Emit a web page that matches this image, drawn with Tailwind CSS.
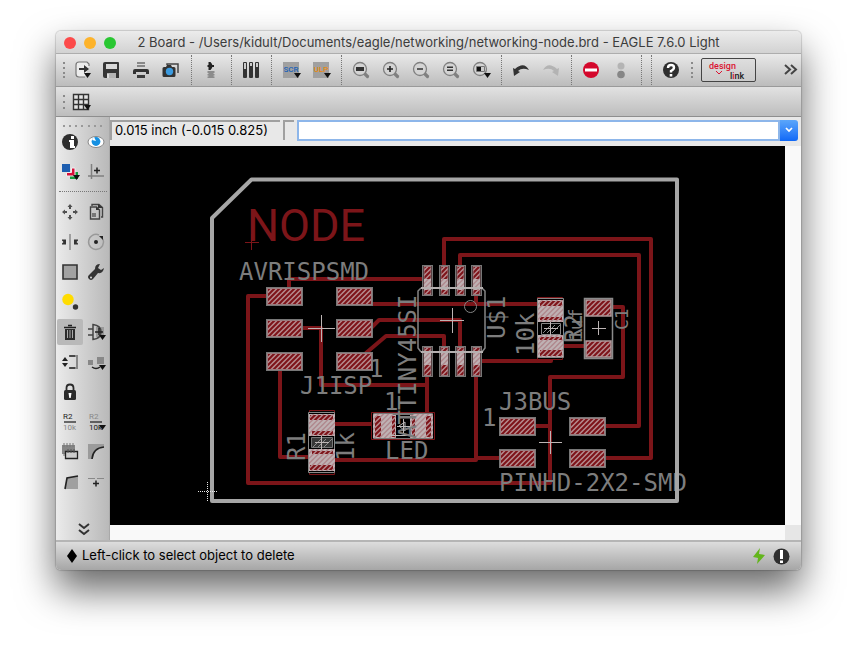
<!DOCTYPE html>
<html lang="en">
<head>
<meta charset="utf-8">
<title>2 Board - networking-node.brd - EAGLE 7.6.0 Light</title>
<script src="https://cdn.jsdelivr.net/npm/@tailwindcss/browser@4"></script>
</head>
<body class="bg-white font-['Inter','Liberation_Sans',sans-serif]">
<main class="mx-14 mt-[31px] mb-20 overflow-hidden rounded-[5px] bg-[#e8e8e8] shadow-[0_0_1px_1px_rgba(0,0,0,0.15),0_20px_38px_rgba(0,0,0,0.6)]">

  <!-- Title bar -->
  <header class="flex h-[23px] items-center border-b border-[#adadad] bg-linear-to-b from-[#ececec] to-[#d2d2d2] px-2 pt-[2px]">
    <div class="flex gap-2">
      <button aria-label="Close" class="size-3 rounded-full bg-[#fc4a4a]"></button>
      <button aria-label="Minimise" class="size-3 rounded-full bg-[#fdb32b]"></button>
      <button aria-label="Zoom" class="size-3 rounded-full bg-[#29c732]"></button>
    </div>
    <h1 class="min-w-0 flex-1 pr-13 text-center text-[13px] whitespace-nowrap text-[#3c3c3c]">2 Board - /Users/kidult/Documents/eagle/networking/networking-node.brd - EAGLE 7.6.0 Light</h1>
  </header>

  <!-- Action toolbar -->
  <nav aria-label="Actions" class="flex h-[33px] items-center border-b border-[#9a9a9a] bg-linear-to-b from-[#e9e9e9] to-[#bcbcbc]">
    <svg class="h-[30px] w-[10px]" viewBox="0 0 10 30" fill="#8a8a8a"><path d="M7 7h2v2H7zM7 12h2v2H7zM7 17h2v2H7zM7 21h2v2H7z"/></svg>
    <button aria-label="Open"><svg width="30" height="30" viewBox="0 0 30 30"><path d="M23 11V9l-2-2h-8q-3 0-3 3v9q0 3 3 3h6" fill="#ececec" stroke="#777" stroke-width="1.200"/><path d="M13 13h5v-3l5 4-5 4v-3h-5z" fill="#333"/><path d="M18 18h7l-3.500 5z" fill="#111"/></svg></button>
    <button aria-label="Save"><svg width="30" height="30" viewBox="0 0 30 30"><path d="M9 7h13q1 0 1 1v15H9q-2 0-2-2V9q0-2 2-2z" fill="#363636"/><path d="M10 9h11v5H10z" fill="#d9d9d9"/><path d="M11 18h9v5h-9z" fill="#b5b5b5"/><path d="M11 19h2v4h-2z" fill="#ddd"/></svg></button>
    <button aria-label="Print"><svg width="30" height="30" viewBox="0 0 30 30"><path d="M11 7h8v2h-8zM11 10h8v2h-8z" fill="#888"/><path d="M9 14h12q2 0 2 2v3h-3v-2H10v2H7v-3q0-2 2-2z" fill="#333"/><path d="M11 20h8v3h-8z" fill="#3c3c3c"/></svg></button>
    <button aria-label="CAM processor"><svg width="30" height="30" viewBox="0 0 30 30"><path d="M11 10V9h11v9" fill="none" stroke="#444" stroke-width="1.500"/><path d="M8 12h2l1-2h4l1 2h2q1.500 0 1.500 1.500v7q0 1.500-1.500 1.500H8q-1.500 0-1.500-1.500v-7Q6.500 12 8 12z" fill="#333"/><circle cx="13.500" cy="16.500" r="3.700" fill="#3b9be0"/></svg></button>
    <span class="ml-[5px] h-[30px] w-[5px] border-l border-dotted border-[#777]"></span>
    <button aria-label="Switch to schematic"><svg width="30" height="30" viewBox="0 0 30 30"><path d="M12.500 7h2q4 4 0 8h-2v-3h-1v-2h1z" fill="#222"/><path d="M15 10h3v2h-3z" fill="#222"/><path d="M11.500 16h7v2h-7zM11.500 19h7v1.500h-7zM11.500 21.500h7V23h-7z" fill="#8c8c8c"/><path d="M12.500 16h5v7h-5z" fill="#8c8c8c"/></svg></button>
    <span class="ml-[5px] h-[30px] w-[5px] border-l border-dotted border-[#777]"></span>
    <button aria-label="Library"><svg width="30" height="30" viewBox="0 0 30 30"><g fill="#333"><rect x="7" y="7" width="4" height="16" rx="1"/><rect x="13" y="7" width="4" height="16" rx="1"/><rect x="19" y="7" width="4" height="16" rx="1"/></g><path d="M8 8h2v6H8zM14 8h2v3h-2zM20 8h2v4h-2z" fill="#ccc"/></svg></button>
    <span class="ml-[5px] h-[30px] w-[5px] border-l border-dotted border-[#777]"></span>
    <button aria-label="Run script"><svg width="30" height="30" viewBox="0 0 30 30"><path d="M7 7h16v16H7z" fill="#a0a0a0"/><text x="15" y="17" text-anchor="middle" font-family="Roboto,sans-serif" font-size="8" font-weight="500" fill="#1a62b8">SCR</text><path d="M18 18h7l-3.500 5z" fill="#111"/></svg></button>
    <button aria-label="Run user language program"><svg width="30" height="30" viewBox="0 0 30 30"><path d="M7 7h16v16H7z" fill="#a0a0a0"/><text x="15" y="17" text-anchor="middle" font-family="Roboto,sans-serif" font-size="8" font-weight="500" fill="#e8890c">ULP</text><path d="M18 18h7l-3.500 5z" fill="#111"/></svg></button>
    <span class="ml-[5px] h-[30px] w-[5px] border-l border-dotted border-[#777]"></span>
    <button aria-label="Fit"><svg width="30" height="30" viewBox="0 0 30 30"><path d="M18 18l3.500 3.500" stroke="#808080" stroke-width="3.200" stroke-linecap="round"/><circle cx="14" cy="14" r="6.500" fill="#d4d4d4" stroke="#808080" stroke-width="1.300"/><path d="M10 12h8v4h-8z" fill="#333"/></svg></button>
    <button aria-label="Zoom in"><svg width="30" height="30" viewBox="0 0 30 30"><path d="M18 18l3.500 3.500" stroke="#808080" stroke-width="3.200" stroke-linecap="round"/><circle cx="14" cy="14" r="6.500" fill="#d4d4d4" stroke="#808080" stroke-width="1.300"/><path d="M11 13.200h2.200V11h1.600v2.200H17v1.600h-2.200V17h-1.600v-2.200H11z" fill="#222"/></svg></button>
    <button aria-label="Zoom out"><svg width="30" height="30" viewBox="0 0 30 30"><path d="M18 18l3.500 3.500" stroke="#808080" stroke-width="3.200" stroke-linecap="round"/><circle cx="14" cy="14" r="6.500" fill="#d4d4d4" stroke="#808080" stroke-width="1.300"/><path d="M11 13.200h6v1.600h-6z" fill="#333"/></svg></button>
    <button aria-label="Redraw"><svg width="30" height="30" viewBox="0 0 30 30"><path d="M18 18l3.500 3.500" stroke="#808080" stroke-width="3.200" stroke-linecap="round"/><circle cx="14" cy="14" r="6.500" fill="#d4d4d4" stroke="#808080" stroke-width="1.300"/><path d="M11 11.500h6V13h-6zM11 14.500h6V16h-6z" fill="#333"/></svg></button>
    <button aria-label="Select view"><svg width="30" height="30" viewBox="0 0 30 30"><circle cx="14" cy="14" r="6.500" fill="#d4d4d4" stroke="#808080" stroke-width="1.300"/><path d="M10.500 11.500h8v5h-8z" fill="#ccc" stroke="#777"/><path d="M11 12h4v4h-4z" fill="#111"/><path d="M18 18h7l-3.500 5z" fill="#111"/></svg></button>
    <span class="ml-[5px] h-[30px] w-[5px] border-l border-dotted border-[#777]"></span>
    <button aria-label="Undo"><svg width="30" height="30" viewBox="0 0 30 30"><path d="M7 13l1 8 6-4-2-1q4-4 11-1-5-9-14-1z" fill="#333"/></svg></button>
    <button aria-label="Redo" disabled><svg width="30" height="30" viewBox="0 0 30 30"><path d="M23 13l-1 8-6-4 2-1q-4-4-11-1 5-9 14-1z" fill="#b3b3b3"/></svg></button>
    <span class="ml-[5px] h-[30px] w-[5px] border-l border-dotted border-[#777]"></span>
    <button aria-label="Stop"><svg width="30" height="30" viewBox="0 0 30 30"><circle cx="15" cy="15" r="8" fill="#d4082c"/><path d="M9 13.500h12v3H9z" fill="#fff"/></svg></button>
    <button aria-label="Go" disabled><svg width="30" height="30" viewBox="0 0 30 30"><circle cx="15" cy="11" r="3.500" fill="#b4b4b4"/><circle cx="15" cy="19.500" r="3.800" fill="#868686"/></svg></button>
    <span class="ml-[5px] h-[30px] w-[5px] border-l border-dotted border-[#777]"></span>
    <span class="ml-[5px] h-[30px] w-[5px] border-l border-dotted border-[#777]"></span>
    <button aria-label="Help"><svg width="30" height="30" viewBox="0 0 30 30"><circle cx="15" cy="15" r="8" fill="#2e2e2e"/><path d="M12 13q0-3 3-3t3 2.500q0 2-3 3.500v1.500" fill="none" stroke="#fff" stroke-width="2.400"/><path d="M13.700 19h2.600v2.500h-2.600z" fill="#fff"/></svg></button>
    <svg class="mr-[5px] h-[30px] w-[10px]" viewBox="0 0 10 30" fill="#8a8a8a"><path d="M5 7h2v2H5zM5 12h2v2H5zM5 17h2v2H5zM5 21h2v2H5z"/></svg>
    <button aria-label="design link" class="h-6 w-[55px] rounded-[2px] border border-[#444] bg-linear-to-b from-[#dedede] to-[#cacaca]"><svg width="53" height="22" viewBox="0 0 53 22" font-family="Roboto,sans-serif" font-weight="500" font-size="9"><text x="7" y="10" fill="#db1231">design</text><text x="28" y="20" fill="#222">l<tspan fill="#db1231">i</tspan>nk</text><path d="M14 12l3 3 3-3" fill="none" stroke="#db1231"/></svg></button>
    <button aria-label="More actions" class="ml-auto mr-[2px]"><svg width="16" height="30" viewBox="0 0 16 30" fill="none" stroke="#444" stroke-width="2"><path d="M2 10l5 4.500L2 19M8 10l5 4.500L8 19"/></svg></button>
  </nav>

  <!-- Parameter toolbar -->
  <nav aria-label="Parameters" class="flex h-[30px] items-center border-b border-[#8e8e8e] bg-linear-to-b from-[#e2e2e2] to-[#bdbdbd]">
    <svg class="h-[30px] w-[10px]" viewBox="0 0 10 30" fill="#8a8a8a"><path d="M7 8h2v2H7zM7 14h2v2H7zM7 20h2v2H7z"/></svg>
    <button aria-label="Grid"><svg width="30" height="30" viewBox="0 0 30 30"><path d="M7.500 7.500h15v15h-15zM12.500 7.500v15M17.500 7.500v15M7.500 12.500h15M7.500 17.500h15" fill="#e4e4e4" stroke="#333" stroke-width="1.400"/><path d="M18 18h7l-3.500 5z" fill="#111"/></svg></button>
  </nav>

  <div class="flex">
    <!-- Tool palette -->
    <nav aria-label="Tools" class="flex w-[54px] shrink-0 flex-col border-r border-[#a9a9a9] bg-linear-to-r from-[#ebebeb] to-[#b9b9b9] pl-px">
      <svg class="h-[10px] w-full" viewBox="0 0 52 10" fill="#999"><path d="M6 8h2v2H6zM12 8h2v2h-2zM18 8h2v2h-2zM24 8h2v2h-2zM31 8h2v2h-2zM37 8h2v2h-2zM43 8h2v2h-2z"/></svg>
      <div class="grid grid-cols-2">
        <button aria-label="Info"><svg width="26" height="30" viewBox="0 0 26 30"><circle cx="13" cy="15" r="8" fill="#2e2e2e"/><path d="M14 9h3v3h-3zM12 13h5v6h1v2h-5v-6h-1z" fill="#fff"/></svg></button>
        <button aria-label="Show"><svg width="26" height="30" viewBox="0 0 26 30"><ellipse cx="13" cy="15" rx="8" ry="5.500" fill="#fff" stroke="#888"/><circle cx="13" cy="14.500" r="4.400" fill="#1590e2"/><path d="M11 10l2 4-4-1z" fill="#fff"/></svg></button>
        <button aria-label="Display layers"><svg width="26" height="30" viewBox="0 0 26 30"><path d="M13 22v-3h5v-4h3v7z" fill="#159c3d"/><path d="M9.500 19v-3.500h5V11H18v8z" fill="#d8103a" stroke="#eee"/><path d="M5 7h8v8H5z" fill="#1d5eb0"/><path d="M16 18h7l-3.500 5z" fill="#111"/></svg></button>
        <button aria-label="Mark"><svg width="26" height="30" viewBox="0 0 26 30"><path d="M8.500 7v15M5 19h16" stroke="#808080" stroke-width="1.500"/><path d="M11 13.500h6M14 10.500v6" stroke="#222" stroke-width="1.500"/></svg></button>
      </div>
      <div class="flex h-[10px] flex-col pt-1"><span class="mx-0.5 border-t border-dotted border-[#777]"></span></div>
      <div class="grid grid-cols-2">
        <button aria-label="Move"><svg width="26" height="30" viewBox="0 0 26 30" fill="#505050"><path d="M13 7l2.500 3H14v2h-2v-2h-1.500zM13 23l2.500-3H14v-2h-2v2h-1.500zM5 15l3-2.500V14h2v2H8v1.500zM21 15l-3-2.500V14h-2v2h2v1.500z"/></svg></button>
        <button aria-label="Copy"><svg width="26" height="30" viewBox="0 0 26 30"><path d="M9 9V7.500h7l3.500 3V20H18M7.500 10h6l3 3v9h-9z" fill="none" stroke="#444" stroke-width="1.400"/><path d="M15 7l5 4h-5zM13 10l4 3h-4z" fill="#333"/><path d="M9 16h4v4H9z" fill="#777"/></svg></button>
        <button aria-label="Mirror"><svg width="26" height="30" viewBox="0 0 26 30"><path d="M13 7v16" stroke="#888" stroke-width="1.500"/><path d="M5 12.500h4v5H5v-1l1.500-1.500L5 13.500zM21 12.500h-4v5h4v-1L19.500 15l1.500-1.500z" fill="#333"/></svg></button>
        <button aria-label="Rotate"><svg width="26" height="30" viewBox="0 0 26 30"><path d="M16 8a7.500 7.500 0 1 0 4 4" fill="none" stroke="#999" stroke-width="1.500"/><circle cx="13" cy="15" r="2" fill="#222"/><path d="M16 9h4v4z" fill="#222"/></svg></button>
        <button aria-label="Group"><svg width="26" height="30" viewBox="0 0 26 30"><path d="M6 8h14v14H6z" fill="#a2a2a2" stroke="#333" stroke-width="1.600"/></svg></button>
        <button aria-label="Change"><svg width="26" height="30" viewBox="0 0 26 30"><path d="M17 7q-5 0-5 5l-6 6q-2 2 0 4t4 0l5-6q5 1 6-5l-3 2-3-2z" fill="#333"/><circle cx="8" cy="20.500" r="1" fill="#ddd"/></svg></button>
        <button aria-label="Paste"><svg width="26" height="30" viewBox="0 0 26 30"><circle cx="11" cy="12.500" r="5.700" fill="#ffdc00"/><circle cx="18.500" cy="20" r="2.700" fill="#333"/></svg></button>
        <span></span>
        <button aria-label="Delete" aria-pressed="true" class="h-[30px]"><svg width="26" height="30" viewBox="0 0 26 30"><rect y="2" width="26" height="26" rx="2" fill="#b9b9b9"/><path d="M11 8.500h4M7 10.500h12" fill="none" stroke="#222" stroke-width="1.600"/><path d="M8 12h10v11H8z" fill="#2c2c2c"/><path d="M10.500 13v8M13 13v8M15.500 13v8" stroke="#aaa"/></svg></button>
        <button aria-label="Add"><svg width="26" height="30" viewBox="0 0 26 30"><path d="M13 10h8v10h-8z" fill="#999"/><path d="M5 12h5M5 18h5M10 7.500q8 1 8 7.500t-8 7.500z" fill="none" stroke="#444" stroke-width="1.500"/><path d="M12 15h8M16 11v7" stroke="#222" stroke-width="1.500"/><path d="M16 18h7l-3.500 5z" fill="#111"/></svg></button>
        <button aria-label="Pinswap"><svg width="26" height="30" viewBox="0 0 26 30"><path d="M5 14l3-4 3 4zM5 16l3 4 3-4z" fill="#222"/><path d="M13 9h7v12h-7" fill="none" stroke="#888" stroke-width="2"/><path d="M12 9h6M12 21h6" stroke="#333" stroke-width="1.500"/></svg></button>
        <button aria-label="Replace"><svg width="26" height="30" viewBox="0 0 26 30"><path d="M5 13h5v5H5zM14 10h7v7h-7z" fill="#888"/><path d="M9 20q4 3 8 0" fill="none" stroke="#222" stroke-width="1.500"/><path d="M16 18h7l-3.500 5z" fill="#111"/></svg></button>
        <button aria-label="Lock"><svg width="26" height="30" viewBox="0 0 26 30"><path d="M9.500 14v-3q0-3.500 3.500-3.500t3.500 3.500v3" fill="none" stroke="#2a2a2a" stroke-width="1.800"/><rect x="7" y="13" width="12" height="10" rx="1.500" fill="#2a2a2a"/><path d="M11.500 16h3l-.8 5h-1.400z" fill="#fff"/></svg></button>
        <span></span>
        <button aria-label="Name"><svg width="26" height="30" viewBox="0 0 26 30" font-family="Roboto,sans-serif" font-size="8"><text x="6" y="12" fill="#222">R2</text><path d="M7 15h12" stroke="#333" stroke-width="1.400"/><text x="6" y="23" fill="#888">10k</text></svg></button>
        <button aria-label="Value"><svg width="26" height="30" viewBox="0 0 26 30" font-family="Roboto,sans-serif" font-size="8"><text x="6" y="12" fill="#888">R2</text><path d="M7 15h12" stroke="#333" stroke-width="1.400"/><text x="6" y="23" fill="#222">10k</text><path d="M16 18h7l-3.500 5z" fill="#111"/></svg></button>
        <button aria-label="Smash"><svg width="26" height="30" viewBox="0 0 26 30"><path d="M5 8h13v9H5z" fill="#858585"/><path d="M7 6v4M10 6v4M13 6v4M16 6v4M7 16v3" stroke="#777"/><path d="M8.500 14.500h12v7h-12z" fill="#ccc" stroke="#222" stroke-width="1.300"/><path d="M11 12v4M14 12v4M17 12v4" stroke="#555"/></svg></button>
        <button aria-label="Miter"><svg width="26" height="30" viewBox="0 0 26 30"><path d="M5 7h16v3q-11 1-12 12H5z" fill="#9b9b9b"/><path d="M9 22q1-11 12-12" fill="none" stroke="#222" stroke-width="1.600"/></svg></button>
        <button aria-label="Split"><svg width="26" height="30" viewBox="0 0 26 30"><path d="M8 22l2-11 11-2v13z" fill="#a0a0a0"/><path d="M8 22l2-11 11-2" fill="none" stroke="#222" stroke-width="1.600"/></svg></button>
        <button aria-label="Optimize"><svg width="26" height="30" viewBox="0 0 26 30"><path d="M5 11.500h7M14 11.500h7" stroke="#888"/><path d="M10 16.500h6M13 13.500v6" stroke="#222" stroke-width="1.500"/></svg></button>
      </div>
      <button aria-label="More tools" class="mt-auto mb-1 self-center"><svg width="14" height="16" viewBox="0 0 14 16" fill="none" stroke="#333" stroke-width="2"><path d="M3 4l5 4 5-4M3 10l5 4 5-4"/></svg></button>
    </nav>

    <div class="flex min-w-0 flex-1 flex-col">
      <!-- Coordinates and command line -->
      <div class="flex h-[29px] items-center gap-[3px] pr-[3px] pb-[3px]">
        <output class="flex h-5 w-[170px] items-center border-t-2 border-l-2 border-[#a0a0a0] pl-[3px] text-[13px] whitespace-nowrap text-black">0.015 inch (-0.015 0.825)</output>
        <span class="h-5 w-[11px] border-t-2 border-l-2 border-[#a0a0a0]"></span>
        <div class="flex h-[21px] min-w-0 flex-1">
          <input type="text" aria-label="Command" class="min-w-0 flex-1 border-2 border-[#8db6ea] bg-white px-1 text-[13px] outline-none">
          <button aria-label="Command history" class="flex w-[18px] items-center justify-center rounded-r-[3px] bg-linear-to-b from-[#5ba6fa] to-[#0f68f7]"><svg width="10" height="8" viewBox="0 0 10 8" fill="none" stroke="#fff" stroke-width="1.700"><path d="M2 2l3 3 3-3"/></svg></button>
        </div>
      </div>

      <div class="flex">
        <div class="min-w-0 flex-1 bg-black">
          <svg class="block h-auto w-full" viewBox="110 146 675 379" role="img" aria-label="Board layout">
            <defs>
              <pattern id="hatch" width="5" height="5" patternUnits="userSpaceOnUse"><path d="M0 0h5v5H0z" fill="#b58a8d"/><path d="M-1 1l2-2M0 5l5-5M4 6l2-2" stroke="#7d1218" stroke-width="2"/></pattern>
              <pattern id="mask" width="5" height="5" patternUnits="userSpaceOnUse"><path d="M0 0h5v5H0z" fill="#b0898e"/><path d="M-1 1l2-2M0 5l5-5M4 6l2-2" stroke="#bfb2b4" stroke-width="2"/></pattern>
              <g id="pad"><rect x=".5" y=".5" width="36" height="18" fill="#000" stroke="#777"/><rect x="1.500" y="1.500" width="34" height="16" fill="url(#hatch)" stroke="#9a7c7f"/></g>
              <g id="lead"><rect x=".5" y=".5" width="10" height="30" fill="#150a0a" stroke="#777"/><rect x="2" y="1.500" width="7" height="28" fill="url(#hatch)" stroke="#98797c"/></g>
            </defs>

            <!-- Copper traces -->
            <g fill="none" stroke="#7c1519" stroke-width="4" stroke-linejoin="round" stroke-linecap="round">
              <path d="M289 296V279H428M267 296H248V483H550V377H623V307H600M372 304H540M370 329L379 320H460V350M366 353L386 336H444V350M302 328H321V385H427V422M427 385V370M280 370V457H310M334 424H374M334 460H476V370M476 458H502M481 361H551V357M563 346H586M444 266V239H651V458H604M460 266V255H639V426H604M476 290V304M534 426H550"/>
            </g>
            <text x="247" y="241" font-family="Roboto,sans-serif" font-size="45" fill="#7c1519">NODE</text>
            <path d="M245 242.500h14M251.500 234v16" stroke="#7c1519"/>

            <!-- Header pads -->
            <use href="#pad" x="266" y="287"/><use href="#pad" x="266" y="319"/><use href="#pad" x="266" y="352"/>
            <use href="#pad" x="336" y="287"/><use href="#pad" x="336" y="319"/><use href="#pad" x="336" y="352"/>
            <use href="#pad" x="499" y="417"/><use href="#pad" x="499" y="449"/>
            <use href="#pad" x="569" y="417"/><use href="#pad" x="569" y="449"/>

            <!-- Microcontroller -->
            <use href="#lead" x="422" y="265"/><use href="#lead" x="439" y="265"/><use href="#lead" x="455" y="265"/><use href="#lead" x="471" y="265"/>
            <use href="#lead" x="422" y="346"/><use href="#lead" x="439" y="346"/><use href="#lead" x="455" y="346"/><use href="#lead" x="471" y="346"/>
            <path d="M424 279h7v11h-7zM441 279h7v11h-7zM457 279h7v11h-7zM473 279h7v11h-7zM424 353h7v12h-7zM441 353h7v12h-7zM457 353h7v12h-7zM473 353h7v12h-7z" fill="url(#mask)"/>
            <path d="M421 288L418 291V348L421 352M482 288L485 291V348L482 352" fill="none" stroke="#858585" stroke-width="1.500"/>
            <path d="M421 288H483M421 352H483" stroke="#b5b0b0" stroke-width="2"/>
            <circle cx="470.500" cy="306.500" r="6" fill="none" stroke="#858585"/>

            <!-- R2 -->
            <path d="M537.500 297.500h25v62h-25z" fill="#000" stroke="#7c1519"/>
            <path d="M537.500 298.500h26v59h-26z" fill="#000" stroke="#888"/>
            <path d="M538 300h25v22h-25zM538 335h25v22h-25z" fill="url(#mask)"/>
            <path d="M540 301h22v5h-22zM540 317h22v3h-22zM540 337h22v3h-22zM540 350h22v6h-22z" fill="url(#hatch)"/>
            <path d="M541.500 323.500h19v11h-19zM543 333l8-8M547 333l8-8M552 333l8-8" fill="none" stroke="#888"/>

            <!-- R1 -->
            <path d="M309.500 410.500h25v64h-25z" fill="#050505" stroke="#7c1519"/>
            <path d="M308.500 412.500h26v60h-26z" fill="#000" stroke="#888"/>
            <path d="M309 414h26v22h-26zM309 449h26v22h-26z" fill="url(#mask)"/>
            <path d="M310 415h23v5h-23zM312 431h21v4h-21zM312 451h21v3h-21zM310 465h23v5h-23z" fill="url(#hatch)"/>
            <path d="M311.500 437.500h21v10h-21z" fill="#383838" stroke="#777"/>
            <path d="M313 447l8-8M318 447l8-8M324 447l8-8" stroke="#8b8b8b"/>

            <!-- Capacitor -->
            <path d="M584.500 298.500h28v60h-28z" fill="#000" stroke="#8b8b8b" stroke-width="1.500"/>
            <path d="M586 300h25v16h-25zM586 341h25v16h-25z" fill="url(#hatch)" stroke="#b0999b" stroke-width="1.500"/>

            <!-- LED -->
            <path d="M371.500 412.500h63v27h-63z" fill="#000" stroke="#7c1519"/>
            <path d="M373.500 413.500h59v25h-59z" fill="none" stroke="#777"/>
            <path d="M373 414h23v24h-23zM410 414h23v24h-23z" fill="url(#mask)"/>
            <path d="M375 416h6v21h-6zM392 416h3v21h-3zM412 416h3v21h-3zM426 416h5v21h-5z" fill="url(#hatch)"/>
            <path d="M393 414.500h20" stroke="#777"/>
            <path d="M391 435.500h22M397 426.500h18M399 426l6-4v9z" fill="none" stroke="#bbb"/>

            <!-- Silkscreen names and values -->
            <g font-family="'DejaVu Sans Mono','Liberation Mono',monospace" font-size="24" fill="#7d7d7d">
              <text x="239" y="280">AVRISPSMD</text>
              <text x="300" y="394">J1ISP</text>
              <text x="369" y="377">1</text>
              <text x="384" y="410">1</text>
              <text x="385" y="459">LED</text>
              <text x="499" y="410">J3BUS</text>
              <text x="482" y="426">1</text>
              <text x="499" y="491">PINHD-2X2-SMD</text>
              <text transform="translate(416 439) rotate(-90)">ATTINY45SI</text>
              <text transform="translate(505 339) rotate(-90)">U$1</text>
              <text transform="translate(534 356) rotate(-90)">10k</text>
              <text transform="translate(582 343) rotate(-90)">R2</text>
              <text transform="translate(305 461) rotate(-90)">R1</text>
              <text transform="translate(354 461) rotate(-90)">1k</text>
              <g font-size="18">
                <text transform="translate(582 341) rotate(-90)">1uf</text>
                <text transform="translate(628 330) rotate(-90)">C1</text>
              </g>
            </g>

            <!-- Part origins -->
            <path d="M308 328.500h27M321.500 315v27M440 320.500h24M452.500 308v25M539 442.500h23M550.500 431v23M592 328.500h14M598.500 321v14M544 328.500h14M550.500 322v14M315 442.500h14M321.500 436v14M403.500 419v14" stroke="#bdb5b5"/>
            <!-- Board outline -->
            <path d="M251.500 179.500H677V501H212V218z" fill="none" stroke="#a6a6a6" stroke-width="4" stroke-linejoin="round"/>
            <path d="M198 491.500h20M207.500 482v19" stroke="#e8e8e8" stroke-dasharray="1 1"/>
          </svg>
        </div>
        <div class="w-4 shrink-0 bg-[#f9f9f9]"></div>
      </div>
      <div class="flex h-[15px] justify-end bg-[#f9f9f9]"><span class="w-4 bg-[#e6e6e6]"></span></div>
    </div>
  </div>

  <!-- Status bar -->
  <footer class="flex h-[30px] items-center border-t-2 border-[#b5b5b5] bg-linear-to-b from-[#dddddd] to-[#a6a6a6] pr-[11px] pl-[10px]">
    <svg width="12" height="14" viewBox="0 0 12 14"><path d="M6 0l5 7-5 7-5-7z" fill="#000"/></svg>
    <p class="ml-1 text-[13px] text-black">Left-click to select object to delete</p>
    <svg class="ml-auto" width="14" height="18" viewBox="0 0 14 18"><path d="M8 1L1 10l5 1-1 6 8-9-6-1z" fill="#63b51c"/></svg>
    <button aria-label="Messages" class="ml-[7px]"><svg width="17" height="17" viewBox="0 0 17 17"><circle cx="8.500" cy="8.500" r="8" fill="#2e2e2e"/><path d="M7 2h3v9H7zM7 12.500h3V15H7z" fill="#fff"/></svg></button>
  </footer>
</main>
</body>
</html>
